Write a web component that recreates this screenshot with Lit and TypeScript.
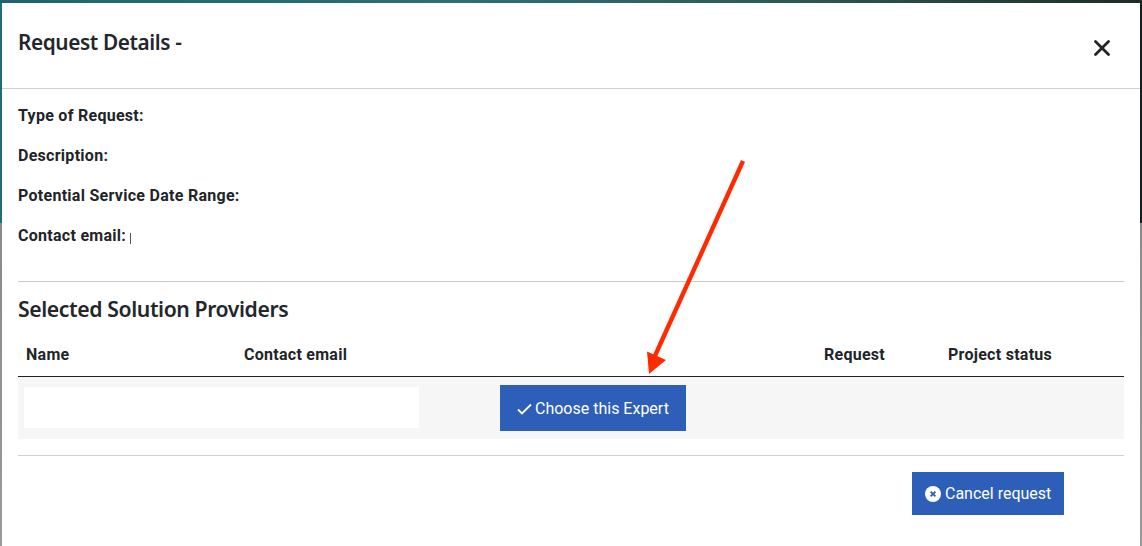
import { LitElement, html, css } from "lit";
import { customElement } from "lit/decorators.js";

@customElement("app-root")
export class AppRoot extends LitElement {
  static styles = css`
    :host {
      display: block;
      position: relative;
      width: 1142px;
      height: 546px;
      overflow: hidden;
      box-sizing: border-box;
      padding: 3px 2px 0;
      background:
        linear-gradient(90deg, #1d6f80 0, #1d6f80 2px, transparent 2px, transparent 1140px, #10201c 1140px),
        #10201c;
      font-family: "Roboto", "Liberation Sans", sans-serif;
      color: #212529;
    }
    .under {
      position: absolute;
      left: 0;
      right: 0;
      top: 223px;
      bottom: 0;
      background: linear-gradient(180deg, #8a8a8a, #9a9a9a);
    }
    .top {
      position: absolute;
      left: 0;
      right: 0;
      top: 0;
      height: 3px;
      background: linear-gradient(90deg, #1f6470, #2c6f78 40%, #2b5a55 70%, #1c2d26);
    }
    .modal {
      position: relative;
      background: #fff;
      height: 543px;
      display: flex;
      flex-direction: column;
    }
    .head {
      height: 86px;
      box-sizing: border-box;
      border-bottom: 1px solid #d0d0d0;
      display: flex;
      justify-content: space-between;
      padding: 24px 30px 0 16px;
    }
    h2 {
      margin: 0;
      font: 600 20.8px/30px "Noto Sans", sans-serif;
      letter-spacing: -0.4px;
      color: #23272b;
    }
    .close {
      width: 16px;
      height: 16px;
      margin-top: 13px;
    }
    .body {
      padding: 0 16px;
      display: flex;
      flex-direction: column;
    }
    .fields {
      padding-top: 17px;
      display: flex;
      flex-direction: column;
      gap: 20px;
      height: 193px;
      box-sizing: border-box;
      border-bottom: 1px solid #c8c8c8;
      margin-bottom: 12px;
    }
    .field {
      font: 700 16px/20px "Roboto", sans-serif;
      letter-spacing: 0.28px;
      display: flex;
      align-items: center;
      gap: 4px;
    }
    .caret {
      width: 1px;
      height: 11px;
      margin-top: 4px;
      background: #555;
    }
    h3 {
      margin: 0;
      font: 600 21.2px/30px "Noto Sans", sans-serif;
      letter-spacing: -0.4px;
      color: #23272b;
    }
    .thead {
      display: grid;
      grid-template-columns: 218px 580px 124px 1fr;
      padding: 22px 8px 0;
      height: 54px;
      box-sizing: border-box;
      border-bottom: 1px solid #222;
      font: 700 16px/20px "Roboto", sans-serif;
      letter-spacing: 0.27px;
      margin-top: -1px;
    }
    .row {
      height: 62px;
      background: #f6f6f6;
      display: flex;
      align-items: flex-start;
    }
    .blank {
      width: 395px;
      height: 41px;
      margin: 10px 81px 0 6px;
      background: #fff;
    }
    .btn {
      background: #2d5eb8;
      color: #fff;
      font: 400 16px/20px "Roboto", sans-serif;
      display: flex;
      align-items: center;
      box-sizing: border-box;
    }
    .choose {
      width: 186px;
      height: 46px;
      margin-top: 8px;
      padding: 1px 0 0 17px;
      gap: 3px;
    }
    .rule {
      height: 1px;
      background: #d0d0d0;
      margin-top: 16px;
    }
    .foot {
      display: flex;
      justify-content: flex-end;
      padding: 16px 60px 0 0;
    }
    .cancel {
      width: 152px;
      height: 43px;
      padding-left: 13px;
      gap: 4px;
    }
    .arrow {
      position: absolute;
      left: 0;
      top: 0;
      width: 1142px;
      height: 546px;
      pointer-events: none;
    }
  `;

  render() {
    return html`
      <div class="under"></div>
      <div class="top"></div>
      <div class="modal">
        <div class="head">
          <h2>Request Details -</h2>
          <svg class="close" viewBox="0 0 16 16">
            <path d="M1.5 1.5 14.5 14.5M14.5 1.5 1.5 14.5" stroke="#212529" stroke-width="2.8" stroke-linecap="round" fill="none"></path>
          </svg>
        </div>
        <div class="body">
          <div class="fields">
            <div class="field">Type of Request:</div>
            <div class="field">Description:</div>
            <div class="field">Potential Service Date Range:</div>
            <div class="field">Contact email: <span class="caret"></span></div>
          </div>
          <h3>Selected Solution Providers</h3>
          <div class="thead">
            <span>Name</span><span>Contact email</span><span>Request</span><span>Project status</span>
          </div>
          <div class="row">
            <div class="blank"></div>
            <div class="btn choose">
              <svg width="15" height="12" viewBox="0 0 15 12">
                <path d="M1 6.5 5 10.5 14 1.5" stroke="#fff" stroke-width="1.8" fill="none"></path>
              </svg>
              Choose this Expert
            </div>
          </div>
          <div class="rule"></div>
          <div class="foot">
            <div class="btn cancel">
              <svg width="16" height="16" viewBox="0 0 16 16">
                <circle cx="8" cy="8" r="8" fill="#fff"></circle>
                <path d="M5.6 5.6 10.4 10.4M10.4 5.6 5.6 10.4" stroke="#2d5eb8" stroke-width="1.8"></path>
              </svg>
              Cancel request
            </div>
          </div>
        </div>
      </div>
      <svg class="arrow" viewBox="0 0 1142 546">
        <path d="M743 161 654 358" stroke="#ff2a00" stroke-width="4.4" fill="none"></path>
        <path d="M649 374 647 351.5 666 360Z" fill="#ff2a00"></path>
      </svg>
    `;
  }
}
